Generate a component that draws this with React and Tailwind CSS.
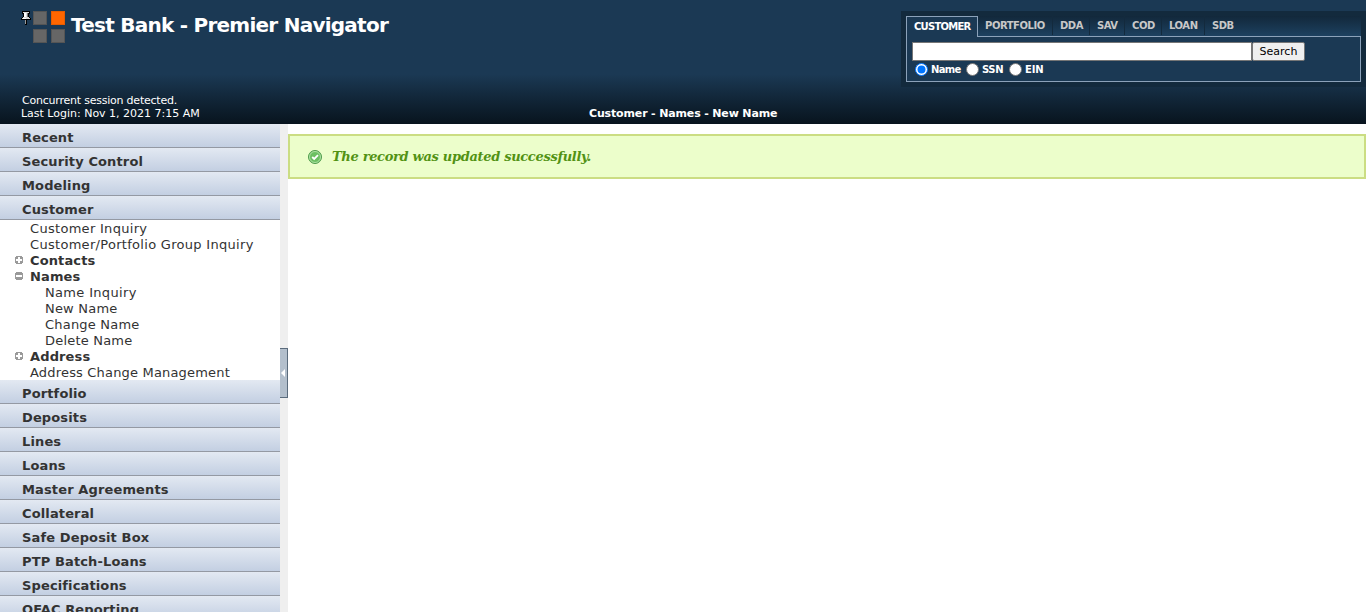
const topSections = ['Recent', 'Security Control', 'Modeling', 'Customer'];
const bottomSections = ['Portfolio', 'Deposits', 'Lines', 'Loans', 'Master Agreements', 'Collateral', 'Safe Deposit Box', 'PTP Batch-Loans', 'Specifications', 'OFAC Reporting'];
const otherTabs = [
  { label: 'PORTFOLIO', width: 'w-[75px]' },
  { label: 'DDA', width: 'w-[37px]' },
  { label: 'SAV', width: 'w-[35px]' },
  { label: 'COD', width: 'w-[37px]' },
  { label: 'LOAN', width: 'w-[43px]' },
  { label: 'SDB', width: 'w-[40px]' },
];

function Section({ label }) {
  return (
    <div className="h-6 shrink-0 border-b border-[#9499a3] bg-linear-to-b from-[#e3e9f2] to-[#c3cfe2] pl-[22px] pt-1 text-[13px] leading-5 font-bold tracking-[0.13px] text-[#333]">
      {label}
    </div>
  );
}

function Toggle({ open }) {
  return (
    <svg className="h-2 w-2 shrink-0" viewBox="0 0 8 8" shapeRendering="crispEdges">
      <path d="M1 0h6v1h1v6h-1v1h-6v-1h-1v-6h1z" fill="#9a9a9a" />
      <path d={open ? 'M1 3h6v2h-6z' : 'M3 1h2v2h2v2h-2v2h-2v-2h-2v-2h2z'} fill="#fff" />
    </svg>
  );
}

function Item({ label, tracking = 'tracking-[0.3px]' }) {
  return <div className={`h-4 pl-[30px] leading-[18px] ${tracking}`}>{label}</div>;
}

function SubItem({ label, tracking = 'tracking-[0.2px]' }) {
  return <div className={`h-4 pl-[45px] leading-[18px] ${tracking}`}>{label}</div>;
}

function Group({ label, open }) {
  return (
    <div className="flex h-4 items-center gap-[7px] pl-[15px] font-bold tracking-[0.13px]">
      <Toggle open={open} />
      <span className="h-4 leading-[18px]">{label}</span>
    </div>
  );
}

function Pin() {
  return (
    <svg className="mt-[11px] h-[14px] w-[10px] shrink-0" viewBox="0 0 10 14" shapeRendering="crispEdges">
      <path d="M1 0h8v3h-1v3h1v1h1v2h-4v5h-2v-5h-4v-2h1v-1h1v-3h-1z" fill="#000" />
      <path d="M2 1h6v1h-1v4h1v1h1v1h-8v-1h1v-1h1v-4h-1z" fill="#d8d8d8" />
      <path d="M3 2h2v4h-2zM2 7h3v1h-3z" fill="#fff" />
      <path d="M6 2h1v4h-1z" fill="#777" />
      <path d="M4 9h1v4h-1z" fill="#999" />
    </svg>
  );
}

function Radio({ label, checked, className }) {
  return (
    <label className={`flex items-center ${className}`}>
      <svg className="h-[13px] w-[13px]" viewBox="0 0 13 13">
        <circle cx="6.5" cy="6.5" r="6" fill="#fff" stroke={checked ? '#0075ff' : '#767676'} />
        {checked && <circle cx="6.5" cy="6.5" r="4" fill="#0075ff" />}
      </svg>
      <span className="ml-[3px] text-[10px] font-bold">{label}</span>
    </label>
  );
}

export default function App() {
  return (
    <div className="flex h-[612px] w-[1366px] flex-col overflow-hidden bg-white font-['Verdana','DejaVu_Sans',sans-serif] text-[13px] text-[#333]">
      <header className="flex h-[124px] shrink-0 bg-linear-to-b from-[#1b3954] from-[60%] to-[#08141e] text-white">
        <div className="flex w-[589px] flex-col">
          <div className="flex h-[94px] pl-[21px]">
            <Pin />
            <div className="mt-[11px] ml-[2px] grid h-8 w-8 grid-cols-2 gap-1">
              <div className="border border-[#555] bg-[#666]" />
              <div className="border border-[#e65c00] bg-[#ff6600]" />
              <div className="border border-[#555] bg-[#666]" />
              <div className="border border-[#555] bg-[#666]" />
            </div>
            <h1 className="mt-[11px] ml-[6px] text-[20px] leading-7 font-bold tracking-[-0.75px] whitespace-nowrap">Test Bank - Premier Navigator</h1>
          </div>
          <div className="pl-[22px] text-[11px] leading-[13px] tracking-[-0.22px]">Concurrent session detected.</div>
          <div className="pl-[21px] text-[11px] leading-[13px] tracking-[-0.01px]">Last Login: Nov 1, 2021 7:15 AM</div>
        </div>
        <div className="w-[312px] pt-[107px] text-[11px] leading-[14px] font-bold tracking-[-0.15px]">Customer - Names - New Name</div>
        <div className="mt-[11px] h-[76px] w-[465px] bg-[#132a3d] p-[5px]">
          <div className="flex h-[20px] bg-linear-to-b from-[#12283b] to-[#1d4160]">
            <div className="relative h-[21px] w-[72px] border border-b-0 border-[#8ca2ba] bg-[#1b3954] pl-[7px] text-[10px] leading-5 font-bold tracking-[-0.75px]">CUSTOMER</div>
            {otherTabs.map((t) => (
              <div key={t.label} className={`h-[19px] border-r border-[#132a3d] pl-[7px] text-[10px] leading-[19px] font-bold tracking-[-0.45px] text-[#c8c8c8] last:border-r-0 ${t.width}`}>{t.label}</div>
            ))}
          </div>
          <div className="h-[46px] border border-[#8ca2ba] bg-[#1b3954] pt-[5px] pl-[5px]">
            <div className="flex h-[19px]">
              <div className="h-[19px] w-[340px] border border-[#767676] bg-white" />
              <button className="h-[19px] w-[53px] rounded-[2px] border border-[#767676] bg-[#efefef] text-[11px] leading-[18px] text-black">Search</button>
            </div>
            <div className="flex pt-[2px] pl-[3px] leading-[13px]">
              <Radio label="Name" checked className="w-[51px] tracking-[-0.7px]" />
              <Radio label="SSN" className="w-[43px] tracking-[-0.4px]" />
              <Radio label="EIN" className="tracking-[-0.1px]" />
            </div>
          </div>
        </div>
      </header>
      <div className="flex min-h-0 flex-1">
        <nav className="flex w-[280px] flex-col overflow-hidden">
          {topSections.map((s) => <Section key={s} label={s} />)}
          <div className="h-40 shrink-0">
            <Item label="Customer Inquiry" />
            <Item label="Customer/Portfolio Group Inquiry" />
            <Group label="Contacts" />
            <Group label="Names" open />
            <SubItem label="Name Inquiry" tracking="tracking-[0.33px]" />
            <SubItem label="New Name" />
            <SubItem label="Change Name" />
            <SubItem label="Delete Name" />
            <Group label="Address" />
            <Item label="Address Change Management" tracking="tracking-[0.18px]" />
          </div>
          {bottomSections.map((s) => <Section key={s} label={s} />)}
        </nav>
        <div className="w-2 bg-[#efefef] pt-[224px]">
          <div className="flex h-[50px] items-center border-y border-r border-[#5a6b7c] bg-[#b3bfcc]">
            <svg className="ml-px h-2 w-1" viewBox="0 0 4 8"><path d="M4 0v8L0 4z" fill="#fff" /></svg>
          </div>
        </div>
        <main className="flex-1 pt-[10px]">
          <div className="flex h-[45px] items-center border-2 border-[#cbdd83] bg-[#ecfecb] pl-[18px]">
            <svg className="h-[14px] w-[14px]" viewBox="0 0 14 14">
              <circle cx="7" cy="7" r="6.5" fill="#6cc062" stroke="#4f9a4c" />
              <circle cx="7" cy="7" r="5.5" fill="none" stroke="#b4e3aa" strokeWidth="0.9" />
              <path d="M4.2 7l2 2L10 5.2" fill="none" stroke="#fff" strokeWidth="1.8" />
            </svg>
            <p className="ml-[10px] font-['Georgia','DejaVu_Serif',serif] text-[13px] font-bold tracking-[-0.32px] text-[#529214] italic">The record was updated successfully.</p>
          </div>
        </main>
      </div>
    </div>
  );
}
